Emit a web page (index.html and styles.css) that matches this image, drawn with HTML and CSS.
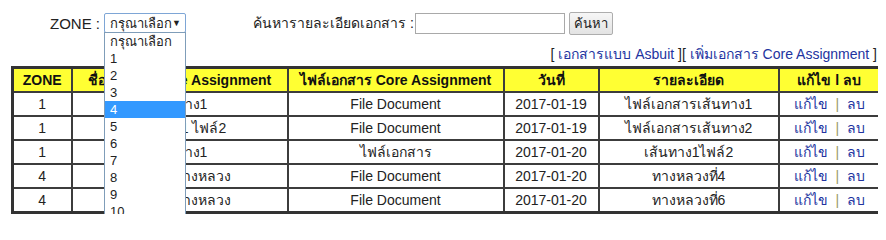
FILE: index.html
```html
<!DOCTYPE html>
<html lang="th">
<head>
<meta charset="utf-8">
<title>Core Assignment</title>
<link rel="stylesheet" href="styles.css">
</head>
<body>
<div class="top">
  <span class="label">ZONE :</span>
  <div class="select-wrap">
    <div class="select"><span>กรุณาเลือก</span><span class="arrow">▼</span></div>
    <ul class="list">
      <li>กรุณาเลือก</li>
      <li>1</li>
      <li>2</li>
      <li>3</li>
      <li class="sel">4</li>
      <li>5</li>
      <li>6</li>
      <li>7</li>
      <li>8</li>
      <li>9</li>
      <li>10</li>
    </ul>
  </div>
  <span class="label search-label">ค้นหารายละเอียดเอกสาร :</span>
  <div class="input"></div>
  <div class="button">ค้นหา</div>
</div>
<div class="links">[ <a href="#">เอกสารแบบ Asbuit</a> ][ <a href="#">เพิ่มเอกสาร Core Assignment</a> ]</div>
<table class="grid">
  <colgroup>
    <col class="c1"><col class="c2"><col class="c3"><col class="c4"><col class="c5"><col class="c6">
  </colgroup>
  <thead>
    <tr><th>ZONE</th><th>ชื่อเอกสาร Core Assignment</th><th>ไฟล์เอกสาร Core Assignment</th><th>วันที่</th><th>รายละเอียด</th><th>แก้ไข l ลบ</th></tr>
  </thead>
  <tbody>
    <tr><td>1</td><td>เส้นทาง1</td><td>File Document</td><td>2017-01-19</td><td>ไฟล์เอกสารเส้นทาง1</td><td><a href="#">แก้ไข</a> <span class="sep">|</span> <a href="#">ลบ</a></td></tr>
    <tr><td>1</td><td>เส้นทาง1 ไฟล์2</td><td>File Document</td><td>2017-01-19</td><td>ไฟล์เอกสารเส้นทาง2</td><td><a href="#">แก้ไข</a> <span class="sep">|</span> <a href="#">ลบ</a></td></tr>
    <tr><td>1</td><td>เส้นทาง1</td><td>ไฟล์เอกสาร</td><td>2017-01-20</td><td>เส้นทาง1ไฟล์2</td><td><a href="#">แก้ไข</a> <span class="sep">|</span> <a href="#">ลบ</a></td></tr>
    <tr><td>4</td><td>เอกสารทางหลวง</td><td>File Document</td><td>2017-01-20</td><td>ทางหลวงที่4</td><td><a href="#">แก้ไข</a> <span class="sep">|</span> <a href="#">ลบ</a></td></tr>
    <tr><td>4</td><td>เอกสารทางหลวง</td><td>File Document</td><td>2017-01-20</td><td>ทางหลวงที่6</td><td><a href="#">แก้ไข</a> <span class="sep">|</span> <a href="#">ลบ</a></td></tr>
  </tbody>
</table>
</body>
</html>
```
FILE: styles.css
```css
body {
  margin: 8px;
  font-family: "Liberation Sans", Tahoma, sans-serif;
  font-size: 14px;
  color: #222;
  background: #fff;
}
.top {
  display: flex;
  align-items: center;
  height: 22px;
  padding: 4px 0 0 42px;
}
.label {
  font-size: 15px;
  color: #222;
}
.select-wrap {
  position: relative;
  margin-left: 4px;
}
.select {
  box-sizing: border-box;
  width: 82px;
  height: 20px;
  border: 1px solid #7ea6d6;
  border-radius: 2px;
  display: flex;
  align-items: center;
  justify-content: space-between;
  padding: 0 4px 0 5px;
  font-size: 13px;
  background: #fff;
}
.arrow {
  font-size: 9px;
}
.list {
  position: absolute;
  left: 0;
  top: 19px;
  width: 82px;
  box-sizing: border-box;
  margin: 0;
  padding: 0;
  list-style: none;
  border: 1px solid #7f9db9;
  background: #fff;
  z-index: 5;
}
.list li {
  height: 17px;
  line-height: 17px;
  padding-left: 5px;
  font-size: 13px;
  color: #222;
}
.list li.sel {
  background: #3399ff;
  color: #fff;
}
.search-label {
  margin-left: 67px;
  font-size: 14px;
}
.input {
  box-sizing: border-box;
  width: 150px;
  height: 21px;
  margin-left: 1px;
  border: 1px solid #a9a9a9;
  background: #fff;
}
.button {
  box-sizing: border-box;
  width: 44px;
  height: 23px;
  margin-left: 4px;
  border: 1px solid #adadad;
  border-radius: 2px;
  background: linear-gradient(#f6f6f6, #e3e3e3);
  font-size: 13px;
  display: flex;
  align-items: center;
  justify-content: center;
}
.links {
  text-align: right;
  padding: 9px 1px 0 0;
  height: 23px;
  line-height: 23px;
  font-size: 14px;
  color: #222;
}
.links a,
.grid a {
  color: #2233a0;
  text-decoration: none;
}
.grid {
  width: 868px;
  margin-left: 3px;
  border-collapse: collapse;
  table-layout: fixed;
  border: 3px solid #333;
}
.c1 { width: 59px; }
.c2 { width: 216px; }
.c3 { width: 216px; }
.c4 { width: 95px; }
.c5 { width: 180px; }
.c6 { width: 102px; }
.grid th,
.grid td {
  border: 2px solid #3c3c3c;
  height: 22px;
  padding: 0;
  text-align: center;
  font-size: 14px;
  white-space: nowrap;
  overflow: hidden;
}
.grid th {
  background: #ffff33;
  font-weight: bold;
  color: #111;
}
.grid td {
  color: #222;
}
.sep {
  color: #99996b;
  margin: 0 4px;
}
```
